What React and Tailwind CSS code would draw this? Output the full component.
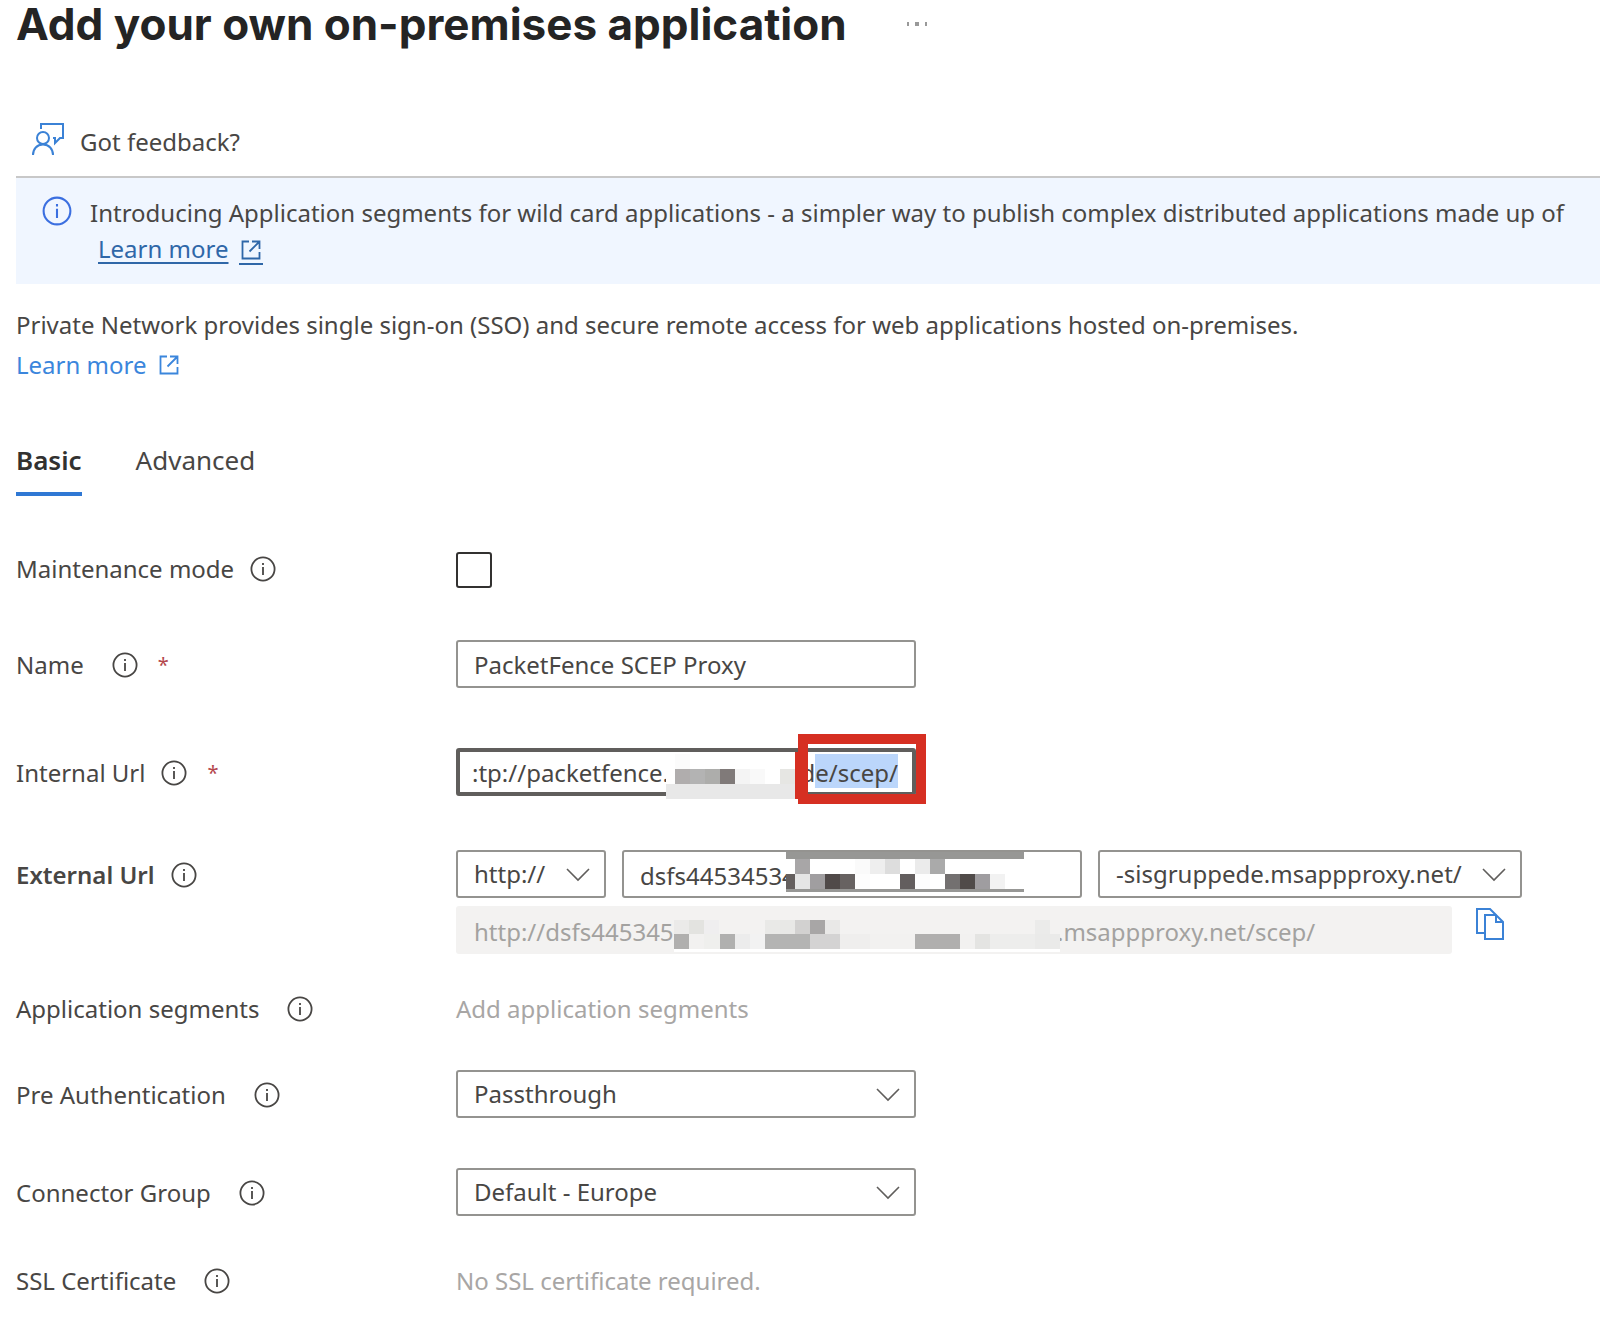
import React, { useState } from 'react';
import clsx from 'clsx';

const InfoIcon = ({ className }) => (
  <svg viewBox="0 0 26 26" className={clsx('shrink-0', className)} fill="none" stroke="currentColor" strokeWidth="1.8" aria-hidden="true">
    <circle cx="13" cy="13" r="11.6" />
    <path d="M13 11v8M13 7v2" />
  </svg>
);

const FeedbackIcon = () => (
  <svg width="32" height="32" viewBox="0 0 32 32" className="mb-1.5 text-[#3b82d6]" fill="none" stroke="currentColor" strokeWidth="2" aria-hidden="true">
    <path d="M9 6V1h22v14h-3l-5 5v-5h-2" />
    <circle cx="11" cy="15" r="6" />
    <path d="M1 32c0-6 4-10.500 10-10.500s10 4.500 10 10.500" />
  </svg>
);

const ExternalIcon = () => (
  <svg width="20" height="20" viewBox="0 0 20 20" fill="none" stroke="currentColor" strokeWidth="1.8" aria-hidden="true">
    <path d="M8 1.500H1.500v17h17V12M11 1.500h7.500V9M18 2L8.500 11.500" />
  </svg>
);

const CopyIcon = () => (
  <svg width="28" height="32" viewBox="0 0 28 32" fill="none" stroke="currentColor" strokeWidth="2" aria-hidden="true">
    <path d="M8 25H1V1h13l6 6" />
    <path d="M9 7h11l7 7v17H9zM20 7v7h7" />
  </svg>
);

const Chevron = () => (
  <svg width="24" height="14" viewBox="0 0 24 14" className="pointer-events-none absolute right-4 top-[18px] text-[#605e5c]" fill="none" stroke="currentColor" strokeWidth="1.6" aria-hidden="true">
    <path d="M1 1l11 11L23 1" />
  </svg>
);

const Select = ({ id, label, value, className }) => (
  <div className={clsx('relative', className)}>
    <select id={id} aria-label={label} className="h-12 w-full appearance-none rounded-[3px] border-2 border-[#949390] bg-white pl-4 pr-10">
      <option>{value}</option>
    </select>
    <Chevron />
  </div>
);

// rows of [width, colour] cells that hide part of a value
const Mosaic = ({ rows, className }) => (
  <div className={clsx('pointer-events-none absolute', className)} aria-hidden="true">
    {rows.map(({ height, cells }, i) => (
      <div key={i} className="flex" style={{ height }}>
        {cells.map(([width, background], j) => (
          <span key={j} className="shrink-0" style={{ width, background }} />
        ))}
      </div>
    ))}
  </div>
);

const internalMask = [
  { height: 2, cells: [[129, '#fff']] },
  { height: 15, cells: [[9, '#fff'], [15, '#fbfbfb'], [105, '#fff']] },
  { height: 15, cells: [[9, '#fff'], [15, '#b0adad'], [15, '#b3b3b3'], [15, '#adadab'], [15, '#807a79'], [15, '#f4f4f4'], [15, '#f9f9f9'], [15, '#fff'], [15, '#e6e6e3']] },
  { height: 15, cells: [[129, '#e8e8e8']] },
];

const externalMask = [
  { height: 7, cells: [[238, '#979795']] },
  { height: 15, cells: [[9, '#fff'], [15, '#a8a6a7'], [45, '#fff'], [15, '#fafafa'], [15, '#eee'], [15, '#ddd'], [15, '#fff'], [15, '#ebebeb'], [15, '#aaa'], [79, '#fff']] },
  { height: 15, cells: [[9, '#645f5e'], [15, '#e5e5e5'], [15, '#a09ea0'], [15, '#504a49'], [15, '#676261'], [15, '#fdfdfd'], [30, '#fff'], [15, '#635e5e'], [15, '#fdfdfd'], [15, '#fff'], [15, '#737070'], [15, '#504b49'], [15, '#9f9da0'], [15, '#f2f2f2'], [19, '#fff']] },
  { height: 3, cells: [[238, '#979795']] },
];

const resultMask = [
  { height: 14, cells: [[15, '#ebeae9'], [15, '#e3e3e0'], [15, '#efeeef'], [46, '#f3f2f1'], [15, '#e9e9e7'], [15, '#e8e8e6'], [15, '#d2d1d0'], [15, '#a8a6a6'], [15, '#e9e8e7'], [195, '#f3f2f1'], [15, '#ebebea'], [10, '#f3f2f1']] },
  { height: 15, cells: [[15, '#b0afae'], [15, '#f2f1f0'], [16, '#efefed'], [15, '#b0b0af'], [15, '#ececec'], [15, '#f2f2f2'], [45, '#b4b4b3'], [30, '#d4d3d3'], [30, '#efeeed'], [45, '#f2f1f0'], [45, '#b0afae'], [15, '#f2f1f0'], [15, '#e4e4e2'], [45, '#ededec'], [25, '#eaeae9']] },
  { height: 3, cells: [[386, '#fff']] },
];

const Row = ({ id, label, required, bold, wide, className, children }) => (
  <div className={clsx('grid grid-cols-[440px_1fr] items-start', className)}>
    <div className="flex h-12 items-center pt-0.5">
      <label htmlFor={id} className={bold ? 'font-semibold' : ''}>{label}</label>
      <InfoIcon className={clsx('size-[26px]', wide ? 'ml-7' : 'ml-4')} />
      {required && <span className="ml-5 text-xl text-[#b4474c]">*</span>}
    </div>
    <div className="min-w-0">{children}</div>
  </div>
);

const App = () => {
  const [maintenance, setMaintenance] = useState(false);
  const [name, setName] = useState('PacketFence SCEP Proxy');

  return (
    <main className="bg-white pb-4 pl-4 font-['Noto_Sans',sans-serif] text-[24px] leading-9 text-[#484644]">
      <header className="flex items-center gap-15">
        <h1 className="whitespace-nowrap font-['Inter',sans-serif] text-[44px] font-bold leading-12 text-[#242424]">Add your own on-premises application</h1>
        <button type="button" aria-label="More options" className="flex gap-1.5">
          <span className="h-1 w-0.5 bg-[#999]" />
          <span className="size-1 bg-[#999]" />
          <span className="h-1 w-0.5 bg-[#999]" />
        </button>
      </header>

      {/* Command bar */}
      <div className="mt-15 flex h-[70px] items-center border-b-2 border-[#c8c8c8] pl-4">
        <button type="button" className="flex items-center gap-4">
          <FeedbackIcon />
          Got feedback?
        </button>
      </div>

      <section className="flex h-[106px] bg-[#f0f6ff] pl-[26px] pt-[17px]">
        <InfoIcon className="mt-px size-[30px] text-[#3b6fe0]" />
        <div className="ml-[18px] whitespace-nowrap">
          <p>Introducing Application segments for wild card applications - a simpler way to publish complex distributed applications made up of</p>
          <a href="#segments" className="ml-2 inline-flex gap-2.5 text-[#2f67a8]">
            <span className="underline decoration-2 underline-offset-4">Learn more</span>
            <span className="flex h-[34px] items-center border-b-2 px-0.5 pt-1.5"><ExternalIcon /></span>
          </a>
        </div>
      </section>

      <p className="mt-[23px] whitespace-nowrap">Private Network provides single sign-on (SSO) and secure remote access for web applications hosted on-premises.</p>
      <a href="#sso" className="mt-1 flex w-fit items-center gap-3 text-[#3b86dc]">
        Learn more
        <ExternalIcon />
      </a>

      <nav className="mt-[59px] flex gap-[54px] text-[26px]" role="tablist">
        <button type="button" role="tab" aria-selected="true" className="h-[54px] border-b-4 border-[#2f78d4] pb-3.5 font-semibold text-[#323130]">Basic</button>
        <button type="button" role="tab" aria-selected="false" className="h-[54px] pb-5">Advanced</button>
      </nav>

      <form>
        <Row id="maintenance" label="Maintenance mode" className="mt-12">
          <input
            id="maintenance"
            type="checkbox"
            checked={maintenance}
            onChange={(e) => setMaintenance(e.target.checked)}
            className="mt-2 block size-9 appearance-none rounded-[3px] border-2 border-[#323130] checked:bg-[#2f78d4]"
          />
        </Row>

        <Row id="name" label="Name" required wide className="mt-12">
          <input id="name" value={name} onChange={(e) => setName(e.target.value)} className="block h-12 w-[460px] rounded-[3px] border-2 border-[#949390] px-4" />
        </Row>

        <Row id="internal" label="Internal Url" required className="mt-[60px]">
          <div className="relative w-[460px]">
            <input id="internal" defaultValue=":tp://packetfence." className="block h-12 w-full rounded-[3px] border-4 border-[#605e5c] px-3" />
            <span className="absolute right-[18px] top-1.5 leading-[30px]">d<mark className="inline-block bg-[#bbd6fb] pt-1 text-inherit">e/scep/</mark></span>
            <Mosaic rows={internalMask} className="left-[210px] top-1" />
            <span className="absolute left-[339px] top-1 h-[47px] w-1 bg-[#d62f22]" />
            <span className="absolute -top-3.5 left-[342px] h-[70px] w-32 border-10 border-[#d62f22]" />
          </div>
        </Row>

        <Row id="external" label="External Url" bold className="mt-[54px]">
          <div className="flex gap-4">
            <Select label="Protocol" value="http://" className="w-[150px]" />
            <div className="relative w-[460px]">
              <input id="external" defaultValue="dsfs44534534" className="block h-12 w-full rounded-[3px] border-2 border-[#949390] px-4 pt-0.5" />
              <Mosaic rows={externalMask} className="left-[164px] top-0.5" />
            </div>
            <Select label="Domain" value="-sisgruppede.msappproxy.net/" className="w-[424px]" />
          </div>
          <div className="mt-2 flex gap-6">
            <div className="relative w-[996px]">
              <input aria-label="Resulting url" disabled defaultValue="http://dsfs4453453" className="block h-12 w-full rounded-[3px] bg-[#f3f2f1] px-[18px] pt-0.5 text-[#a3a2a0]" />
              <span className="absolute left-[601px] top-2 text-[#a3a2a0]">.msappproxy.net/scep/</span>
              <Mosaic rows={resultMask} className="left-[218px] top-3.5" />
            </div>
            <button type="button" aria-label="Copy url" className="h-9 text-[#3b82d6]"><CopyIcon /></button>
          </div>
        </Row>

        <Row label="Application segments" wide className="mt-[30px]">
          <p className="pt-[7px] text-[#a8a6a5]">Add application segments</p>
        </Row>

        <Row id="preauth" label="Pre Authentication" wide className="mt-[38px]">
          <Select id="preauth" value="Passthrough" className="w-[460px]" />
        </Row>

        <Row id="connector" label="Connector Group" wide className="mt-[50px]">
          <Select id="connector" value="Default - Europe" className="w-[460px]" />
        </Row>

        <Row label="SSL Certificate" wide className="mt-10">
          <p className="pt-[7px] text-[#a8a6a5]">No SSL certificate required.</p>
        </Row>
      </form>
    </main>
  );
};

export default App;
